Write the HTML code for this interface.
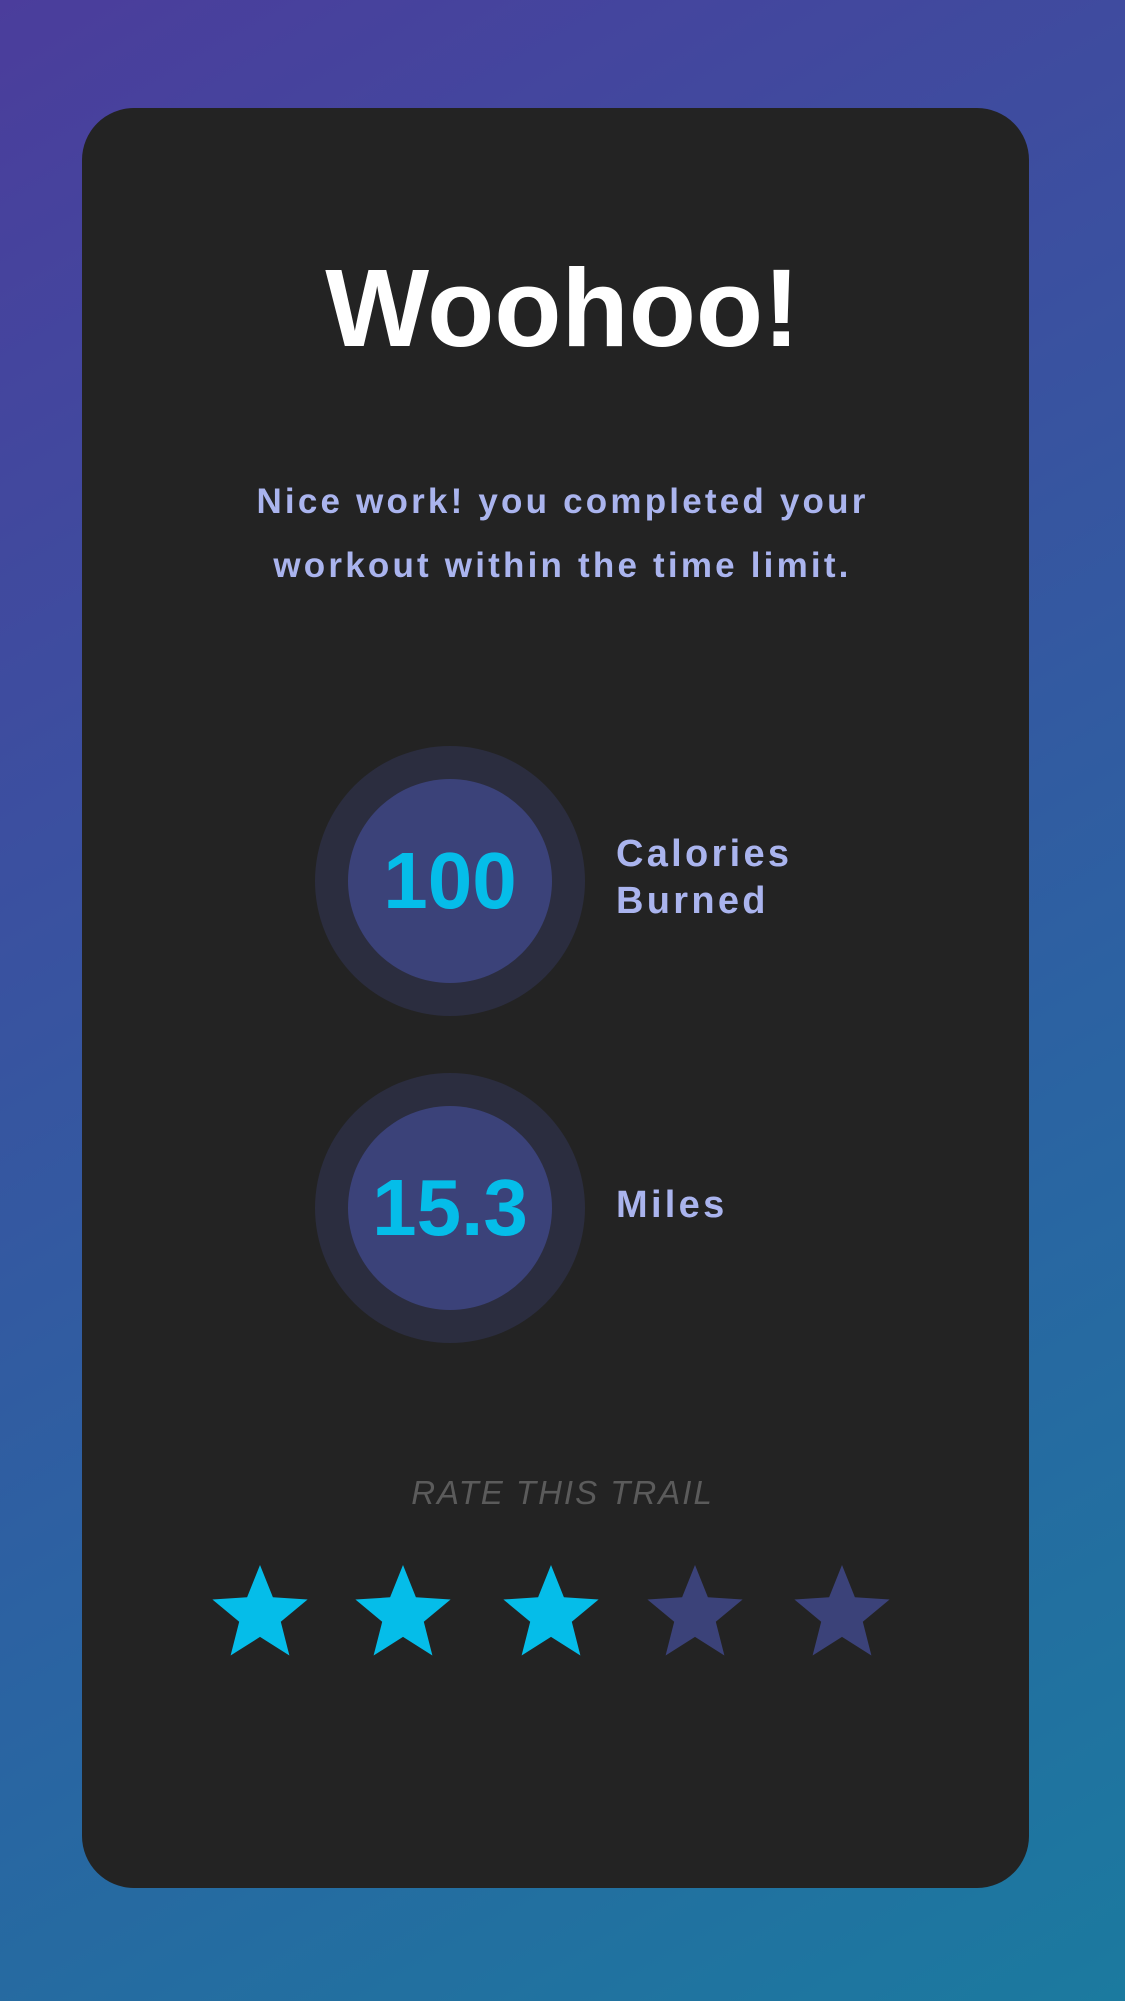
<!DOCTYPE html>
<html><head><meta charset="utf-8"><style>
*{margin:0;padding:0;box-sizing:border-box}
html,body{width:1125px;height:2001px;overflow:hidden}
body{background:linear-gradient(150deg,#4b3d9c 0%,#3a51a0 35%,#2a64a2 65%,#1b7a9f 100%);font-family:"Liberation Sans",sans-serif;position:relative}
.card{position:absolute;left:82px;top:108px;width:947px;height:1780px;background:#232323;border-radius:52px}
.t{position:absolute;left:0;width:1125px;text-align:center}
h1{position:absolute;left:0;width:1125px;text-align:center;top:234px;font-size:110px;font-weight:bold;color:#fff;line-height:150px}
.sub{top:470px;font-size:35px;font-weight:bold;letter-spacing:3.2px;color:#aab4ee;line-height:64px}
.ring{position:absolute;width:270px;height:270px;border-radius:50%;background:#2b2d3f;left:315px}
.in{position:absolute;left:33px;top:33px;width:204px;height:204px;border-radius:50%;background:#3b4279;color:#05bde9;font-weight:bold;font-size:80px;letter-spacing:0;text-align:center;line-height:204px}
.lab{position:absolute;left:616px;font-size:38px;font-weight:bold;letter-spacing:3.3px;color:#aab4ee;line-height:47px}
.rate{top:1470px;font-size:33px;font-style:italic;color:#5b5b5b;letter-spacing:2px;line-height:46px}
svg{position:absolute;top:0;left:0}
</style></head><body>
<div class="card"></div>
<h1>Woohoo!</h1>
<div class="t sub">Nice work! you completed your<br>workout within the time limit.</div>
<div class="ring" style="top:746px"><div class="in">100</div></div>
<div class="lab" style="top:831px">Calories<br>Burned</div>
<div class="ring" style="top:1073px"><div class="in">15.3</div></div>
<div class="lab" style="top:1182px">Miles</div>
<div class="t rate">RATE THIS TRAIL</div>
<svg width="1125" height="2001">
<defs><polygon id="s" points="0,-50 12.9,-17.7 47.6,-15.5 20.8,6.8 29.4,40.5 0,21.9 -29.4,40.5 -20.8,6.8 -47.6,-15.5 -12.9,-17.7"/></defs>
<use href="#s" x="260" y="1615" fill="#05bde9"/>
<use href="#s" x="403" y="1615" fill="#05bde9"/>
<use href="#s" x="551" y="1615" fill="#05bde9"/>
<use href="#s" x="695" y="1615" fill="#3b4279"/>
<use href="#s" x="842" y="1615" fill="#3b4279"/>
</svg>
</body></html>
